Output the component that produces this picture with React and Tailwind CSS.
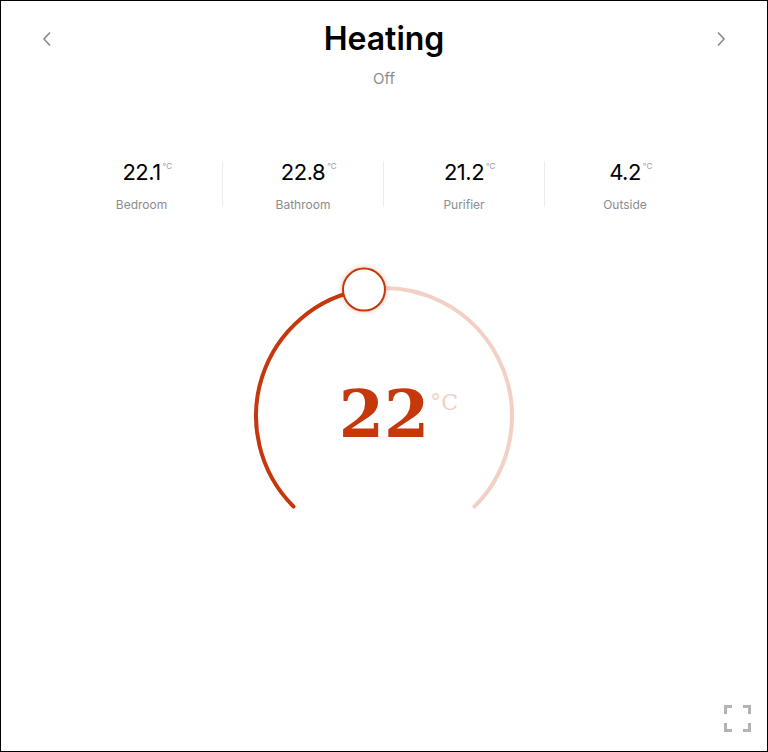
import React from "react";

const sensors = [
  { value: "22.1", label: "Bedroom" },
  { value: "22.8", label: "Bathroom" },
  { value: "21.2", label: "Purifier" },
  { value: "4.2", label: "Outside" },
];

const polar = (cx, cy, r, deg) => {
  const a = (deg * Math.PI) / 180;
  return [cx + r * Math.sin(a), cy - r * Math.cos(a)];
};

const arcPath = (cx, cy, r, from, to) => {
  const [x1, y1] = polar(cx, cy, r, from);
  const [x2, y2] = polar(cx, cy, r, to);
  const large = to - from > 180 ? 1 : 0;
  return `M ${x1} ${y1} A ${r} ${r} 0 ${large} 1 ${x2} ${y2}`;
};

const Gauge = ({ angle }) => {
  const cx = 150;
  const cy = 153;
  const r = 128;
  const [kx, ky] = polar(cx, cy, r, angle);

  return (
    <div className="relative w-[300px] h-[260px]">
      <svg width="300" height="260" viewBox="0 0 300 260">
        <defs>
          <filter id="knobShadow" x="-50%" y="-50%" width="200%" height="200%">
            <feDropShadow dx="0" dy="0" stdDeviation="2.5" floodColor="#c4380c" floodOpacity="0.35" />
          </filter>
        </defs>
        <path
          d={arcPath(cx, cy, r, angle, 135)}
          fill="none"
          stroke="#f2d0c5"
          strokeWidth="4"
          strokeLinecap="round"
        />
        <path
          d={arcPath(cx, cy, r, -135, angle)}
          fill="none"
          stroke="#c4380c"
          strokeWidth="4"
          strokeLinecap="round"
        />
        <circle
          cx={kx}
          cy={ky}
          r="21"
          fill="#ffffff"
          stroke="#c4380c"
          strokeWidth="2"
          filter="url(#knobShadow)"
        />
      </svg>
      <div className="absolute left-0 right-0 top-[119px] flex justify-center">
        <div className="relative">
          <span className="block font-['DejaVu_Serif',serif] font-bold text-[65px] leading-none text-[#c4380c]">
            22
          </span>
          <span className="absolute left-full top-[10px] ml-[1px] font-['DejaVu_Serif',serif] text-[22px] leading-none text-[#f2cfc3]">
            °C
          </span>
        </div>
      </div>
    </div>
  );
};

export default function App() {
  return (
    <div className="w-[768px] h-[752px] bg-white border border-black relative font-['Inter',sans-serif] flex flex-col">
      {/* Header */}
      <div className="flex items-start justify-between px-[38px] pt-[18px]">
        <button className="w-[16px] h-[24px] mt-[8px] flex items-center justify-center">
          <svg width="12" height="16" viewBox="0 0 12 16">
            <path d="M9 1.5 3 8l6 6.5" fill="none" stroke="#8a8a8a" strokeWidth="1.6" />
          </svg>
        </button>
        <div className="flex flex-col items-center">
          <h1 className="text-[32px] leading-[40px] font-semibold text-black tracking-[0px]">
            Heating
          </h1>
          <p className="mt-[10px] text-[15px] leading-[20px] text-[#8c8c8c]">Off</p>
        </div>
        <button className="w-[16px] h-[24px] mt-[8px] flex items-center justify-center">
          <svg width="12" height="16" viewBox="0 0 12 16">
            <path d="M3 1.5 9 8l-6 6.5" fill="none" stroke="#8a8a8a" strokeWidth="1.6" />
          </svg>
        </button>
      </div>

      {/* Sensors */}
      <div className="mt-[72px] ml-[60px] w-[644px] grid grid-cols-4">
        {sensors.map((s, i) => (
          <div
            key={s.label}
            className={`flex flex-col items-center h-[46px] ${
              i > 0 ? "border-l border-[#ececec]" : ""
            }`}
          >
            <div className="relative">
              <span className="block text-[22px] leading-[22px] text-black tracking-[-0.5px]">
                {s.value}
              </span>
              <span className="absolute left-full top-[1px] ml-[2px] text-[8px] leading-none text-[#9a9a9a]">
                °C
              </span>
            </div>
            <span className="mt-[15px] text-[12px] leading-[14px] text-[#8c8c8c]">
              {s.label}
            </span>
          </div>
        ))}
      </div>

      {/* Gauge */}
      <div className="mt-[56px] flex justify-center">
        <Gauge angle={-9} />
      </div>

      {/* Fullscreen */}
      <div className="mt-auto flex justify-end pr-[16px] pb-[19px]">
        <svg width="27" height="27" viewBox="0 0 27 27">
          <path
            d="M1.5 9V1.5H8 M19 1.5h6.5V9 M25.5 18v7.5H19 M8 25.5H1.5V18"
            fill="none"
            stroke="#b3b3b3"
            strokeWidth="3"
          />
        </svg>
      </div>
    </div>
  );
}
